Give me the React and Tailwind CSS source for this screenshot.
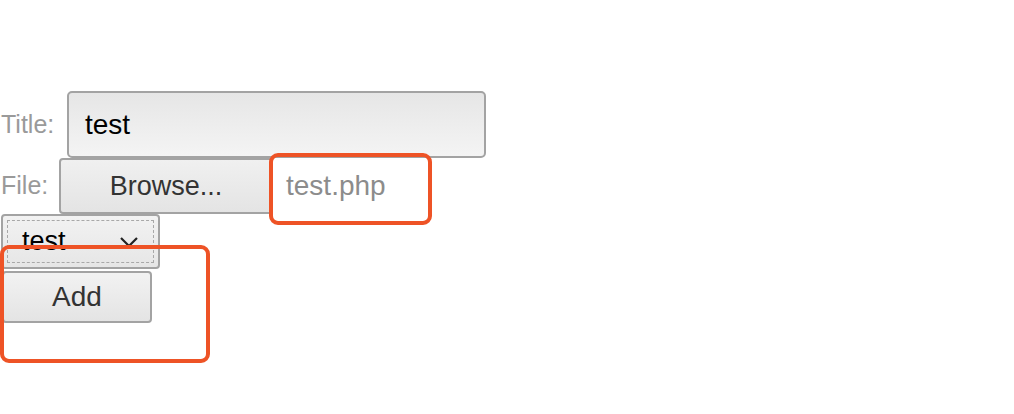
import React from 'react';

const font = { fontFamily: '"Liberation Sans", Arial, sans-serif' };

const App = () => {
  return (
    <div className="relative w-[1014px] h-[414px] bg-white overflow-hidden" style={font}>
      <div className="flex flex-col pt-[91px]">
        {/* title row */}
        <div className="flex items-center h-[67px]">
          <span className="pl-[1px] w-[67px] text-[25px] text-[#9a9a9a]">Title:</span>
          <div className="flex items-center w-[419px] h-[67px] border-2 border-[#a3a3a3] rounded-[5px] bg-gradient-to-b from-[#e6e6e6] to-[#f4f4f4] pl-[16px] text-[28px] text-black">
            test
          </div>
        </div>

        {/* file row */}
        <div className="flex items-center h-[56px]">
          <span className="pl-[1px] w-[59px] text-[25px] text-[#9a9a9a]">File:</span>
          <div className="flex items-center justify-center w-[214px] h-[56px] border-2 border-[#a3a3a3] rounded-[4px] bg-gradient-to-b from-[#f0f0f0] to-[#e4e4e4] text-[27px] text-[#333]">
            Browse...
          </div>
          <span className="pl-[13px] text-[28px] text-[#8c8c8c]">test.php</span>
        </div>

        {/* select */}
        <div className="ml-[1px] w-[159px] h-[55px] border-2 border-[#a3a3a3] rounded-[4px] bg-gradient-to-b from-[#f2f2f2] to-[#e6e6e6] p-[4px]">
          <div className="flex items-center justify-between h-full border border-dashed border-[#a8a8a8] pl-[14px] pr-[14px] text-[27px] text-black">
            <span className="leading-none">test</span>
            <svg width="20" height="12" viewBox="0 0 20 12" fill="none">
              <path d="M2 2l8 8 8-8" stroke="#222" strokeWidth="2.2" />
            </svg>
          </div>
        </div>

        {/* add button */}
        <div className="ml-[2px] mt-[2px] flex items-center justify-center w-[150px] h-[52px] border-2 border-[#a3a3a3] rounded-[4px] bg-gradient-to-b from-[#f2f2f2] to-[#e4e4e4] text-[28px] text-[#333]">
          Add
        </div>
      </div>

      {/* annotation boxes */}
      <div className="absolute left-[269px] top-[153px] w-[163px] h-[72px] border-[4px] border-[#ee5326] rounded-[9px]" />
      <div className="absolute left-[0px] top-[245px] w-[210px] h-[118px] border-[4px] border-[#ee5326] rounded-[9px]" />
    </div>
  );
};

export default App;
